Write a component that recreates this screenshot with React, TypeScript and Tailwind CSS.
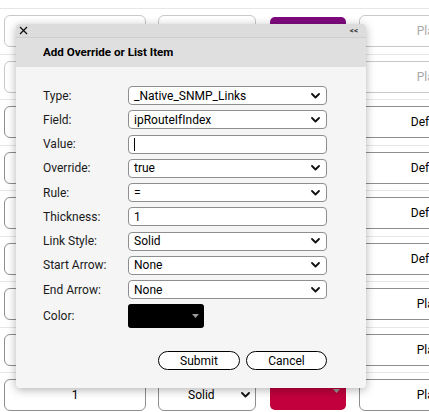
import React from 'react';

type Row = { text: string; color: string; style: string; value: string; disabled?: boolean };

// rows 1-8 of the first two columns sit under the dialog, so only the last row carries values there
const rows: Row[] = [
  { value: '', style: '', color: '#7f0a7f', text: 'Plain', disabled: true },
  { value: '', style: '', color: '#7f0a7f', text: 'Plain', disabled: true },
  { value: '', style: '', color: '#1f6fb5', text: 'Default' },
  { value: '', style: '', color: '#1f6fb5', text: 'Default' },
  { value: '', style: '', color: '#1f6fb5', text: 'Default' },
  { value: '', style: '', color: '#1f6fb5', text: 'Default' },
  { value: '', style: '', color: '#c1003d', text: 'Plain' },
  { value: '', style: '', color: '#c1003d', text: 'Plain' },
  { value: '1', style: 'Solid', color: '#c1003d', text: 'Plain' },
];

const Chevron = () => (
  <svg width="9" height="6" viewBox="0 0 9 6" className="shrink-0">
    <polyline points="1,1 4.5,4.5 8,1" fill="none" stroke="#111" strokeWidth="1.8" strokeLinecap="round" strokeLinejoin="round" />
  </svg>
);

const Caret = () => (
  <svg width="7" height="4" viewBox="0 0 7 4">
    <polygon points="0,0 7,0 3.5,4" fill="#9a9a9a" />
  </svg>
);

const SelectBox = ({ value }: { value: string }) => (
  <div className="flex h-[19px] w-[199px] items-center justify-between rounded-[4px] border border-[#8e8e8e] bg-white pl-[5px] pr-[6px] text-[12px] text-black">
    <span>{value}</span>
    <Chevron />
  </div>
);

const TextBox = ({ value, cursor }: { value?: string; cursor?: boolean }) => (
  <div className="flex h-[19px] w-[199px] items-center rounded-[4px] border border-[#8e8e8e] bg-white pl-[5px] text-[12px] text-black">
    {cursor ? <span className="h-[13px] w-px bg-black" /> : <span>{value}</span>}
  </div>
);

const FormRow = ({ label, children }: { label: string; children: React.ReactNode }) => (
  <div className="flex items-center">
    <div className="w-[85px] text-[12px] text-[#1a1a1a]">{label}</div>
    {children}
  </div>
);

export default function App() {
  return (
    <div
      className="relative h-[412px] w-[429px] overflow-hidden bg-white"
      style={{ fontFamily: 'Roboto, "Liberation Sans", sans-serif' }}
    >
      {/* background table */}
      <div className="h-[9px] border-b border-[#e6e6e6]" />
      {rows.map((r, i) => (
        <div key={i} className="flex h-[45.5px] items-center border-b border-[#e6e6e6] pl-[4px]">
          <div
            className={`flex h-[32px] w-[142px] shrink-0 items-center justify-center rounded-[6px] border bg-white text-[12px] ${
              r.disabled ? 'border-[#c8c8c8] text-[#aaa]' : 'border-[#8e8e8e] text-black'
            }`}
          >
            {r.value}
          </div>
          <div
            className={`ml-[12px] flex h-[32px] w-[98px] shrink-0 items-center rounded-[6px] border bg-white pl-[29px] pr-[5px] text-[12px] ${
              r.disabled ? 'border-[#c8c8c8] text-[#aaa]' : 'border-[#8e8e8e] text-black'
            }`}
          >
            <span className="flex-1">{r.style}</span>
            {!r.disabled && <Chevron />}
          </div>
          <div
            className="ml-[14px] flex h-[29px] w-[76px] shrink-0 items-start justify-end rounded-[5px] pr-[6px] pt-[8px]"
            style={{ backgroundColor: r.color }}
          >
            <Caret />
          </div>
          <div
            className={`ml-[13px] flex h-[32px] w-[142px] shrink-0 items-center justify-center rounded-[6px] border bg-white text-[12px] ${
              r.disabled ? 'border-[#c8c8c8] text-[#a8a8a8]' : 'border-[#8e8e8e] text-black'
            }`}
          >
            {r.text}
          </div>
        </div>
      ))}

      {/* dialog */}
      <div className="absolute left-[16px] top-[24px] flex h-[364px] w-[350px] flex-col overflow-hidden rounded-[4px] bg-[#f5f5f5] shadow-[0_2px_10px_rgba(0,0,0,0.3)]">
        <div className="flex h-[14px] items-center justify-between border-b border-[#cfcfcf] bg-[#dcdcdc] pl-[3px] pr-[8px]">
          <svg width="9" height="9" viewBox="0 0 9 9">
            <path d="M1 1 L8 8 M8 1 L1 8" stroke="#111" strokeWidth="1.3" />
          </svg>
          <span className="text-[8px] font-bold leading-none text-[#333]">&lt;&lt;</span>
        </div>
        <div className="flex h-[29px] items-center bg-[#dfdfdf] pl-[27px] text-[11.6px] font-bold text-black">
          Add Override or List Item
        </div>
        <div className="flex flex-col gap-[5.25px] pl-[27px] pt-[19px]">
          <FormRow label="Type:">
            <SelectBox value="_Native_SNMP_Links" />
          </FormRow>
          <FormRow label="Field:">
            <SelectBox value="ipRouteIfIndex" />
          </FormRow>
          <FormRow label="Value:">
            <TextBox cursor />
          </FormRow>
          <FormRow label="Override:">
            <SelectBox value="true" />
          </FormRow>
          <FormRow label="Rule:">
            <SelectBox value="=" />
          </FormRow>
          <FormRow label="Thickness:">
            <TextBox value="1" />
          </FormRow>
          <FormRow label="Link Style:">
            <SelectBox value="Solid" />
          </FormRow>
          <FormRow label="Start Arrow:">
            <SelectBox value="None" />
          </FormRow>
          <FormRow label="End Arrow:">
            <SelectBox value="None" />
          </FormRow>
          <FormRow label="Color:">
            <div className="flex h-[24px] w-[76px] items-center justify-end rounded-[3px] bg-black pr-[5px]">
              <Caret />
            </div>
          </FormRow>
          <div className="mt-[17px] flex w-[284px] justify-end gap-[6px]">
            <button className="h-[19px] w-[82px] rounded-full border border-black bg-white text-[12px] text-black">
              Submit
            </button>
            <button className="h-[19px] w-[81px] rounded-full border border-black bg-white text-[12px] text-black">
              Cancel
            </button>
          </div>
        </div>
      </div>
    </div>
  );
}
